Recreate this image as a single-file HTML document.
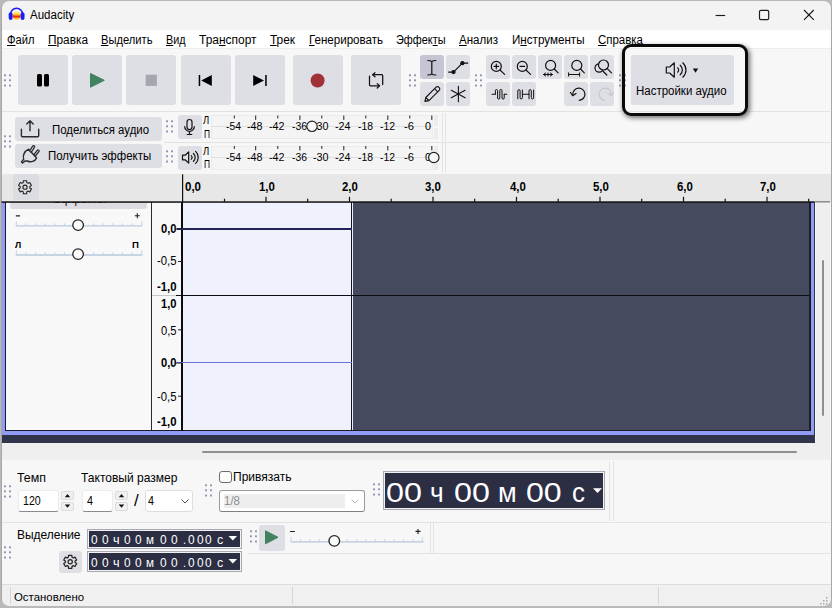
<!DOCTYPE html>
<html lang="ru"><head><meta charset="utf-8"><title>Audacity</title>
<style>
html,body{margin:0;padding:0;}
body{width:832px;height:608px;overflow:hidden;position:relative;background:#b9b9b9;font-family:"Liberation Sans","DejaVu Sans",sans-serif;}
.a{position:absolute;box-sizing:border-box;}
.t{position:absolute;white-space:nowrap;line-height:1;transform-origin:0 0;color:#000;font-family:"Liberation Sans","DejaVu Sans",sans-serif;}
.b{font-weight:bold;}
#win{left:0.500px;top:0.600px;width:831px;height:605.600px;border-radius:8px;background:#f6f6f6;overflow:hidden;border:1px solid #a6a6a6;}
.btn{position:absolute;box-sizing:border-box;background:#dedee5;border-radius:3px;}
.grip{position:absolute;width:7px;height:13px;background-image:radial-gradient(circle at 1.3px 1.3px,#a6a6c0 1.2px,transparent 1.6px);background-size:4.6px 5px;}
svg{position:absolute;overflow:visible;}

</style></head><body>
<div class="a" id="win"></div>
<!-- title bar -->
<div class="a" style="left:1.500px;top:1.400px;width:829px;height:29px;background:#f3f3f3;border-radius:7px 7px 0 0;"></div>
<!-- app icon -->
<svg style="left:8px;top:6px" width="18" height="16" viewBox="8 6 18 16">
  <defs><linearGradient id="lg" x1="0" y1="0" x2="0" y2="1"><stop offset="0" stop-color="#fff3b0"/><stop offset=".35" stop-color="#ffd21e"/><stop offset=".52" stop-color="#ff4a12"/><stop offset=".62" stop-color="#f01a10"/><stop offset=".75" stop-color="#ff9a1a"/><stop offset="1" stop-color="#ffe98a"/></linearGradient></defs>
  <ellipse cx="16.600" cy="15.700" rx="4" ry="4.300" fill="url(#lg)"/>
  <path d="M10.600 14.500 a6 6.300 0 0 1 12 0" fill="none" stroke="#1c1cf0" stroke-width="1.500"/>
  <rect x="8.700" y="12.200" width="3.900" height="7.800" rx="1.950" fill="#1c1cf0"/>
  <rect x="20.600" y="12.200" width="3.900" height="7.800" rx="1.950" fill="#1c1cf0"/>
</svg>
<!-- window controls -->
<svg style="left:700px;top:4px" width="130" height="26" viewBox="0 0 130 26">
  <path d="M15.600 11.500h9.600" stroke="#1a1a1a" stroke-width="1.150" fill="none"/>
  <rect x="59.500" y="6.400" width="9.200" height="9.200" rx="1.400" stroke="#1a1a1a" stroke-width="1.150" fill="none"/>
  <path d="M104 6l9.800 9.800M113.800 6l-9.800 9.800" stroke="#1a1a1a" stroke-width="1.150" fill="none"/>
</svg>
<!-- menubar -->
<div class="a" style="left:1.500px;top:30.200px;width:829px;height:17.600px;background:#fff;"></div>
<!-- toolbars bg -->
<div class="a" style="left:1.500px;top:47.800px;width:829px;height:126.200px;background:#f7f7f7;border-top:1px solid #ededed;"></div>
<div class="a" style="left:2px;top:111px;width:828px;height:1px;background:#e2e2e2;"></div>
<div class="a" style="left:164px;top:142px;width:666px;height:1px;background:#e2e2e2;"></div>

<!-- transport toolbar -->
<svg style="left:3.7px;top:73.5px" width="8" height="13" viewBox="0 0 8 12.5" fill="#9295b5"><rect x="0" y="0" width="2" height="2" rx=".5"/><rect x="5" y="0" width="2" height="2" rx=".5"/><rect x="0" y="5.1" width="2" height="2" rx=".5"/><rect x="5" y="5.1" width="2" height="2" rx=".5"/><rect x="0" y="10.2" width="2" height="2" rx=".5"/><rect x="5" y="10.2" width="2" height="2" rx=".5"/></svg>
<div class="btn" style="left:17.5px;top:55px;width:50px;height:50px"></div>
<div class="btn" style="left:71.8px;top:55px;width:50px;height:50px"></div>
<div class="btn" style="left:126.2px;top:55px;width:50px;height:50px"></div>
<div class="btn" style="left:180.5px;top:55px;width:50px;height:50px"></div>
<div class="btn" style="left:234.8px;top:55px;width:50px;height:50px"></div>
<div class="btn" style="left:293px;top:55px;width:50px;height:50px"></div>
<div class="btn" style="left:351px;top:55px;width:50px;height:50px"></div>
<svg style="left:0;top:0" width="832" height="120" viewBox="0 0 832 120">
  <!-- pause -->
  <rect x="37" y="74" width="5" height="12.5" rx="1.5" fill="#000"/>
  <rect x="44" y="74" width="5" height="12.5" rx="1.5" fill="#000"/>
  <!-- play -->
  <path d="M90.5 73.5 L104.3 80.3 L90.5 87.2Z" fill="#43825f" stroke="#43825f" stroke-width="1" stroke-linejoin="round"/>
  <!-- stop -->
  <rect x="145.7" y="74.7" width="11.2" height="11.2" fill="#a6a6b1"/>
  <!-- skip start -->
  <rect x="198.7" y="75" width="1.5" height="11" fill="#000"/>
  <path d="M201.2 80.5 L211.8 75 V86Z" fill="#000"/>
  <!-- skip end -->
  <rect x="265.2" y="75" width="1.5" height="11" fill="#000"/>
  <path d="M264 80.5 L253.2 75 V86Z" fill="#000"/>
  <!-- record -->
  <circle cx="317.6" cy="80.5" r="7" fill="#a03136"/>
  <!-- loop -->
  <g fill="none" stroke="#111" stroke-width="1.250" stroke-linejoin="round" stroke-linecap="round">
    <path d="M382.7 84.6 V75.7 a1 1 0 0 0 -1 -1 H372.8"/>
    <path d="M375 72.600 L372.700 74.700 L375 76.800"/>
    <path d="M369.500 76 V84.800 a1 1 0 0 0 1 1 H379.400"/>
    <path d="M377.200 83.600 L379.500 85.800 L377.200 88"/>
  </g>
</svg>
<!-- tools toolbar -->
<svg style="left:409.4px;top:73.5px" width="8" height="13" viewBox="0 0 8 12.5" fill="#9295b5"><rect x="0" y="0" width="2" height="2" rx=".5"/><rect x="5" y="0" width="2" height="2" rx=".5"/><rect x="0" y="5.1" width="2" height="2" rx=".5"/><rect x="5" y="5.1" width="2" height="2" rx=".5"/><rect x="0" y="10.2" width="2" height="2" rx=".5"/><rect x="5" y="10.2" width="2" height="2" rx=".5"/></svg>
<div class="btn" style="left:420px;top:55px;width:24px;height:24px;background:#c5c5d3"></div>
<div class="btn" style="left:446px;top:55px;width:24px;height:24px"></div>
<div class="btn" style="left:420px;top:81.5px;width:24px;height:24px"></div>
<div class="btn" style="left:446px;top:81.5px;width:24px;height:24px"></div>
<!-- edit toolbar -->
<svg style="left:475.4px;top:73.5px" width="8" height="13" viewBox="0 0 8 12.5" fill="#9295b5"><rect x="0" y="0" width="2" height="2" rx=".5"/><rect x="5" y="0" width="2" height="2" rx=".5"/><rect x="0" y="5.1" width="2" height="2" rx=".5"/><rect x="5" y="5.1" width="2" height="2" rx=".5"/><rect x="0" y="10.2" width="2" height="2" rx=".5"/><rect x="5" y="10.2" width="2" height="2" rx=".5"/></svg>
<div class="btn" style="left:486px;top:55px;width:24px;height:24px"></div>
<div class="btn" style="left:512px;top:55px;width:24px;height:24px"></div>
<div class="btn" style="left:538px;top:55px;width:24px;height:24px"></div>
<div class="btn" style="left:564px;top:55px;width:24px;height:24px"></div>
<div class="btn" style="left:590px;top:55px;width:24px;height:24px"></div>
<div class="btn" style="left:486px;top:81.5px;width:24px;height:24px"></div>
<div class="btn" style="left:512px;top:81.5px;width:24px;height:24px"></div>
<div class="btn" style="left:564px;top:81.5px;width:24px;height:24px"></div>
<div class="btn" style="left:590px;top:81.5px;width:24px;height:24px"></div>
<svg style="left:0;top:0" width="832" height="120" viewBox="0 0 832 120">
 <g fill="none" stroke="#111" stroke-width="1.2" stroke-linecap="round" stroke-linejoin="round">
  <!-- I-beam -->
  <path d="M427.800 60.500q3 0 4 1.200q1-1.200 4-1.200M427.800 75q3 0 4-1.200q1 1.200 4 1.200M431.800 61.500v12.500"/>
  <!-- envelope -->
  <path d="M448.600 72.100 H453.500 L462.400 63.200 H467.700" stroke-width="1.200"/>
  <circle cx="453.500" cy="72.100" r="2.150" fill="#111" stroke="none"/>
  <circle cx="462.400" cy="63.200" r="2.150" fill="#111" stroke="none"/>
  <!-- pencil -->
  <path d="M424.900 101.400 l0.900-3.900 10.300-10.300 a1.900 1.900 0 0 1 2.700 0 l0.400 0.400 a1.900 1.900 0 0 1 0 2.700 l-10.300 10.300z M425.800 97.500l3.100 3.100 M434.600 88.700l3.100 3.100" stroke-width="1.100"/>
  <!-- multi tool asterisk -->
  <path d="M458.400 86.300v15.400M451.300 90.300l13.800 7.500M465.100 90.300l-13.800 7.500" stroke-width="1.100"/>
  <!-- zoom in -->
  <circle cx="496.3" cy="66.4" r="5"/><path d="M500 70l4.6 4.4M494 66.4h4.6M496.3 64.1v4.6"/>
  <!-- zoom out -->
  <circle cx="522.3" cy="66.4" r="5"/><path d="M526 70l4.6 4.4M520 66.4h4.6"/>
  <!-- fit selection -->
  <circle cx="550.6" cy="65.4" r="5"/><path d="M554.3 69l3.8 3.8"/>
  <path d="M543.5 74.5h9M545.6 73l-2.1 1.5 2.1 1.5M550.4 73l2.1 1.5-2.1 1.5M548 73v3" stroke-width="1"/>
  <!-- fit project -->
  <circle cx="576.8" cy="65.4" r="5"/><path d="M580.5 69l3.8 3.8"/>
  <path d="M568.6 72.8v3.4M579.6 72.8v3.4M568.6 74.5h11" stroke-width="1"/>
  <!-- zoom toggle -->
  <circle cx="599.2" cy="68" r="4.2"/><circle cx="603.5" cy="65" r="5" fill="#dedee5"/><path d="M607.3 68.6l4.2 4.2M603.3 71.5l3.5 3.5"/>
  <!-- trim -->
  <path d="M492 94.2h3.4M504.3 94.2h2.5" stroke-width="1.1"/>
  <path d="M495.4 94.2v-3.6a1.1 1.1 0 0 1 2.2 0v7.4a1.1 1.1 0 0 0 2.2 0v-7.4a1.1 1.1 0 0 1 2.2 0v7.4a1.1 1.1 0 0 0 2.2 0v-3.8" stroke-width="1"/>
  <!-- silence -->
  <path d="M522.4 94.2h6.6" stroke-width="1.1"/>
  <path d="M517.8 98.8v-8a1.1 1.1 0 0 1 2.3 0v7a1.1 1.1 0 0 0 2.3 0v-7.8" stroke-width="1"/>
  <path d="M529 98.8v-8a1.1 1.1 0 0 1 2.3 0v7a1.1 1.1 0 0 0 2.3 0v-7.8" stroke-width="1"/>
  <!-- undo -->
  <path d="M572.8 94.8 a6.1 6.1 0 1 1 6.4 5.5" />
  <path d="M570.4 92.5l2.3 3.2 3.3-2.2"/>
  <!-- redo -->
  <g stroke="#c6c6cf"><path d="M611.2 94.8 a6.1 6.1 0 1 0 -6.4 5.5"/><path d="M613.6 92.5l-2.3 3.2-3.3-2.2"/></g>
 </g>
</svg>
<!-- audio setup -->
<svg style="left:619.4px;top:73.5px" width="8" height="13" viewBox="0 0 8 12.5" fill="#9295b5"><rect x="0" y="0" width="2" height="2" rx=".5"/><rect x="5" y="0" width="2" height="2" rx=".5"/><rect x="0" y="5.1" width="2" height="2" rx=".5"/><rect x="5" y="5.1" width="2" height="2" rx=".5"/><rect x="0" y="10.2" width="2" height="2" rx=".5"/><rect x="5" y="10.2" width="2" height="2" rx=".5"/></svg>
<div class="btn" style="left:630.5px;top:55px;width:103.5px;height:50px"></div>
<svg style="left:0;top:0" width="832" height="120" viewBox="0 0 832 120">
 <g fill="none" stroke="#111" stroke-width="1.2" stroke-linecap="round" stroke-linejoin="round">
  <path d="M666.300 67h3.400l4.600-4.200v14.400l-4.600-4.200h-3.400z"/>
  <path d="M677.600 67.800a2.800 2.800 0 0 1 0 4.400M680.200 65.200a6.400 6.400 0 0 1 0 9.600M682.800 62.800a9.800 9.800 0 0 1 0 14.400"/>
 </g>
 <path d="M692.800 68.500h5.400l-2.700 4.300z" fill="#111"/>
</svg>
<div class="a" style="left:622.4px;top:44.1px;width:125.8px;height:72.2px;border:3.2px solid #0a0a0a;border-radius:9px;box-shadow:1.500px 2px 5px rgba(0,0,0,.55);"></div>
<!-- share / effects toolbar -->
<svg style="left:3.7px;top:135.0px" width="8" height="13" viewBox="0 0 8 12.5" fill="#9295b5"><rect x="0" y="0" width="2" height="2" rx=".5"/><rect x="5" y="0" width="2" height="2" rx=".5"/><rect x="0" y="5.1" width="2" height="2" rx=".5"/><rect x="5" y="5.1" width="2" height="2" rx=".5"/><rect x="0" y="10.2" width="2" height="2" rx=".5"/><rect x="5" y="10.2" width="2" height="2" rx=".5"/></svg>
<div class="btn" style="left:15px;top:117.300px;width:146.800px;height:23.400px"></div>
<div class="btn" style="left:15px;top:143.800px;width:146.800px;height:24px"></div>
<svg style="left:0;top:100px" width="832" height="80" viewBox="0 100 832 80">
 <g fill="none" stroke="#111" stroke-width="1.2" stroke-linecap="round" stroke-linejoin="round">
  <!-- share -->
  <g stroke="#2a2a2a" stroke-width="1.400">
  <path d="M21.400 129.300v6.400a1 1 0 0 0 1 1h15.300a1 1 0 0 0 1-1v-6.400"/>
  <path d="M30 130.800v-9.800M26.800 123.900l3.200-3.200 3.200 3.200"/>
  <!-- plug -->
  <path d="M28.600 149.200 L36.600 158 C35.200 161.300 31 162.800 27.400 161 L25.200 160.900 L22.600 163 L21.500 161.900 L23.700 159.300 C22.400 155.500 24.300 151.300 28.600 149.200Z"/>
  <path d="M30.900 150.900l2.700-4.200M35.300 154.500l2.800-3.500" stroke-width="3.400"/>
  <path d="M30.900 150.900l2.700-4.200M35.300 154.500l2.800-3.500" stroke-width="1" stroke="#dedee5"/>
  </g>
 </g>
</svg>
<!-- meter toolbars -->
<svg style="left:166.4px;top:119.5px" width="8" height="13" viewBox="0 0 8 12.5" fill="#9295b5"><rect x="0" y="0" width="2" height="2" rx=".5"/><rect x="5" y="0" width="2" height="2" rx=".5"/><rect x="0" y="5.1" width="2" height="2" rx=".5"/><rect x="5" y="5.1" width="2" height="2" rx=".5"/><rect x="0" y="10.2" width="2" height="2" rx=".5"/><rect x="5" y="10.2" width="2" height="2" rx=".5"/></svg>
<svg style="left:166.4px;top:150.0px" width="8" height="13" viewBox="0 0 8 12.5" fill="#9295b5"><rect x="0" y="0" width="2" height="2" rx=".5"/><rect x="5" y="0" width="2" height="2" rx=".5"/><rect x="0" y="5.1" width="2" height="2" rx=".5"/><rect x="5" y="5.1" width="2" height="2" rx=".5"/><rect x="0" y="10.2" width="2" height="2" rx=".5"/><rect x="5" y="10.2" width="2" height="2" rx=".5"/></svg>
<div class="btn" style="left:177.5px;top:114.5px;width:24px;height:24px"></div>
<div class="btn" style="left:177.5px;top:145.5px;width:24px;height:24px"></div>
<div class="a" style="left:211px;top:115px;width:221.500px;height:24px;background:#f4f4f4;border:1px solid #ebebeb;"></div>
<div class="a" style="left:211px;top:145.500px;width:221.500px;height:24px;background:#f4f4f4;border:1px solid #ebebeb;"></div>
<div class="a" style="left:211px;top:126px;width:221px;height:1px;background:#dedede;"></div>
<div class="a" style="left:211px;top:157px;width:221px;height:1px;background:#dedede;"></div>
<div class="a" style="left:434px;top:115px;width:4px;height:11px;background:#ececec;"></div>
<div class="a" style="left:434px;top:128px;width:4px;height:11px;background:#ececec;"></div>
<div class="a" style="left:434px;top:145.5px;width:4px;height:11px;background:#ececec;"></div>
<div class="a" style="left:434px;top:158.5px;width:4px;height:11px;background:#ececec;"></div>
<div class="a" style="left:442px;top:113px;width:1px;height:60px;background:#e4e4e4;"></div>
<div class="a" style="left:445px;top:113px;width:1px;height:60px;background:#e4e4e4;"></div>
<svg style="left:0;top:100px" width="832" height="80" viewBox="0 100 832 80">
 <g fill="none" stroke="#111" stroke-width="1.2" stroke-linecap="round" stroke-linejoin="round">
  <!-- mic -->
  <rect x="187" y="119.5" width="5" height="10" rx="2.5"/>
  <path d="M184.7 126.5a4.8 4.8 0 0 0 9.6 0M189.5 131.5v2.8M187.2 134.5h4.6"/>
  <!-- speaker -->
  <path d="M182.5 155.2h2.6l3.6-3.3v11.2l-3.6-3.3h-2.6z"/>
  <path d="M191.2 155.6a2.3 2.3 0 0 1 0 3.6M193.4 153.5a5.2 5.2 0 0 1 0 7.8M195.6 151.4a8.2 8.2 0 0 1 0 12"/>
 </g>
 <g stroke="#222" stroke-width="1">
  <path d="M234.3 115.5v2.9M255.7 115.5v4.4M277.8 115.5v2.9M299.9 115.5v4.4M321.8 115.5v2.9M343.8 115.5v4.4M365.8 115.5v2.9M387.8 115.5v4.4M409.8 115.5v2.9M431.8 115.5v4.4"/>
  <path d="M234.3 146v2.9M255.7 146v4.4M277.8 146v2.9M299.9 146v4.4M321.8 146v2.9M343.8 146v4.4M365.8 146v2.9M387.8 146v4.4M409.8 146v2.9M431.8 146v4.4"/>
 </g>
</svg>
<!-- ruler -->
<div class="a" style="left:1.500px;top:173.600px;width:829px;height:28.400px;background:#e7e7e7;"></div>
<div class="btn" style="left:12.700px;top:174.300px;width:26.200px;height:26px;background:#dcdce3"></div>
<svg style="left:0;top:170px;z-index:2" width="832" height="40" viewBox="0 170 832 40">
 <g fill="none" stroke="#222" stroke-width="1.1" stroke-linejoin="round">
  <path d="M26.80 191.76 L26.67 193.69 L23.33 193.69 L23.20 191.76 L21.96 191.04 L20.21 191.89 L18.55 189.00 L20.15 187.92 L20.15 186.48 L18.55 185.40 L20.21 182.51 L21.96 183.36 L23.20 182.64 L23.33 180.71 L26.67 180.71 L26.80 182.64 L28.04 183.36 L29.79 182.51 L31.45 185.40 L29.85 186.48 L29.85 187.92 L31.45 189.00 L29.79 191.89 L28.04 191.04Z"/>
  <circle cx="25" cy="187.200" r="2.100"/>
 </g>
 <rect x="182" y="174.300" width="1.200" height="28" fill="#111"/>
 <rect x="1.500" y="201.300" width="813" height="1.500" fill="#111"/>
 <rect x="814.500" y="201.300" width="15.500" height="1.100" fill="#6a6a6a"/>
 <g stroke="#111" stroke-width="1.200">
  <path d="M266 196.800v5M349.500 196.800v5M433 196.800v5M516.500 196.800v5M600 196.800v5M683.500 196.800v5M767 196.800v5"/>
  <path d="M224.500 198.800v3M307.700 198.800v3M391.200 198.800v3M474.700 198.800v3M558.200 198.800v3M641.700 198.800v3M725.200 198.800v3M808.700 198.800v3"/>
 </g>
</svg>
<!-- track area -->
<div class="a" style="left:1.500px;top:202px;width:813px;height:240.500px;background:#31354b;"></div>
<div class="a" style="left:1.500px;top:202px;width:812.500px;height:232.800px;background:#8f9bf5;"></div>
<div class="a" style="left:5px;top:202px;width:805.500px;height:229.300px;background:#1c1c28;"></div>
<div class="a" style="left:6px;top:202px;width:146px;height:228px;background:#f8f8f8;"></div>
<div class="a" style="left:152.200px;top:202px;width:29px;height:228px;background:#f8f8f8;"></div>
<div class="a" style="left:151.200px;top:202px;width:1px;height:228px;background:#2a2a34;"></div>
<div class="a" style="left:152.4px;top:294.5px;width:30px;height:1px;background:#c8c8c8;"></div>
<div class="a" style="left:181.200px;top:202px;width:1.800px;height:228.500px;background:#0c0c10;"></div>
<div class="a" style="left:183px;top:202px;width:168px;height:228px;background:#eff1fd;"></div>
<div class="a" style="left:351px;top:202px;width:0.900px;height:228.500px;background:#15151c;"></div>
<div class="a" style="left:351.900px;top:202px;width:1.300px;height:228px;background:#eceefb;"></div>
<div class="a" style="left:353.200px;top:202px;width:456.300px;height:228px;background:#464a5e;"></div>
<div class="a" style="left:176.300px;top:294.700px;width:633.200px;height:1.100px;background:#0c0c10;"></div>
<div class="a" style="left:177px;top:228.2px;width:175px;height:1.6px;background:#23235a;"></div>
<div class="a" style="left:177px;top:362.2px;width:175px;height:1.1px;background:#6a74d8;"></div>
<!-- effects button (cut) -->
<div class="a" style="left:10px;top:202px;width:136.5px;height:6.5px;background:#dcdce3;border-radius:0 0 3px 3px;overflow:hidden;"><span style="position:absolute;left:43.300px;top:-8.800px;font-size:12px;line-height:1;white-space:nowrap;transform:scaleX(.97);transform-origin:0 0;color:#111">Эффекты</span></div>
<svg style="left:0;top:200px" width="832" height="250" viewBox="0 200 832 250">
 <g stroke="#b7c7dc" stroke-width="1.3" fill="none">
  <path d="M15.800 225.900h126.500M15.800 255h126.500"/>
 </g>
 <g stroke="#c6d3e3" stroke-width="1" fill="none">
  <path d="M16.3 221.4v4.5M26.0 223.3v2.6M35.6 223.3v2.6M45.2 223.3v2.6M54.9 223.3v2.6M64.5 223.3v2.6M74.2 223.3v2.6M83.8 223.3v2.6M93.5 223.3v2.6M103.2 223.3v2.6M112.8 223.3v2.6M122.5 223.3v2.6M132.1 223.3v2.6M141.8 221.4v4.5"/>
  <path d="M16.3 250.5v4.5M26.0 252.4v2.6M35.6 252.4v2.6M45.2 252.4v2.6M54.9 252.4v2.6M64.5 252.4v2.6M74.2 252.4v2.6M83.8 252.4v2.6M93.5 252.4v2.6M103.2 252.4v2.6M112.8 252.4v2.6M122.5 252.4v2.6M132.1 252.4v2.6M141.8 250.5v4.5"/>
 </g>
 <circle cx="78.100" cy="225.100" r="5.300" fill="#fcfcfc" stroke="#222" stroke-width="1.300"/>
 <circle cx="78.100" cy="254.100" r="5.300" fill="#fcfcfc" stroke="#222" stroke-width="1.300"/>
 <g stroke="#222" stroke-width="1" fill="none">
  <path d="M176 229h6M178 261.500h3.500M178 329.800h3.500M176 363h6M178 396.200h3.500"/>
  <path d="M15.800 215.900h4.300M134.800 215.800h5M137.300 213.300v5" stroke-width="1.100"/>
 </g>
</svg>
<!-- area below tracks -->
<div class="a" style="left:2px;top:442.5px;width:828px;height:18px;background:#efefef;"></div>
<div class="a" style="left:814.500px;top:202px;width:15.500px;height:241px;background:#efefef;border-left:1.600px solid #f9f9f9;"></div>
<div class="a" style="left:202px;top:451.3px;width:595px;height:1.6px;background:#8f8f8f;border-radius:1px;"></div>
<div class="a" style="left:822.300px;top:260px;width:1.600px;height:156px;background:#8f8f8f;border-radius:1px;"></div>
<!-- bottom toolbars -->
<div class="a" style="left:2px;top:460px;width:828px;height:124.5px;background:#f7f7f7;"></div>
<div class="a" style="left:2px;top:521.5px;width:828px;height:1px;background:#e3e3e3;"></div>
<div class="a" style="left:248px;top:553.3px;width:582px;height:1px;background:#e3e3e3;"></div>
<div class="a" style="left:609.3px;top:461px;width:1px;height:60px;background:#e3e3e3;"></div>
<div class="a" style="left:612.5px;top:461px;width:1px;height:60px;background:#e3e3e3;"></div>
<div class="a" style="left:430px;top:523px;width:1px;height:30px;background:#e3e3e3;"></div>
<div class="a" style="left:433.3px;top:523px;width:1px;height:30px;background:#e3e3e3;"></div>
<!-- time signature toolbar -->
<svg style="left:3.7px;top:484.5px" width="8" height="13" viewBox="0 0 8 12.5" fill="#9295b5"><rect x="0" y="0" width="2" height="2" rx=".5"/><rect x="5" y="0" width="2" height="2" rx=".5"/><rect x="0" y="5.1" width="2" height="2" rx=".5"/><rect x="5" y="5.1" width="2" height="2" rx=".5"/><rect x="0" y="10.2" width="2" height="2" rx=".5"/><rect x="5" y="10.2" width="2" height="2" rx=".5"/></svg>
<div class="a" style="left:18px;top:490px;width:40.5px;height:21.5px;background:#fff;border:1px solid #ececec;border-bottom:1.2px solid #8a8a8a;border-radius:3px;"></div>
<div class="a" style="left:61px;top:491px;width:13px;height:9px;background:#f0f0f0;border:1px solid #dcdcdc;border-radius:2px"></div>
<div class="a" style="left:61px;top:501.500px;width:13px;height:9px;background:#f0f0f0;border:1px solid #dcdcdc;border-radius:2px"></div>
<div class="a" style="left:82px;top:490px;width:30.5px;height:21.5px;background:#fff;border:1px solid #ececec;border-bottom:1.2px solid #8a8a8a;border-radius:3px;"></div>
<div class="a" style="left:115px;top:491px;width:13px;height:9px;background:#f0f0f0;border:1px solid #dcdcdc;border-radius:2px"></div>
<div class="a" style="left:115px;top:501.5px;width:13px;height:9px;background:#f0f0f0;border:1px solid #dcdcdc;border-radius:2px"></div>
<div class="a" style="left:144.5px;top:490px;width:48px;height:21.5px;background:#fff;border:1px solid #dedede;border-radius:3px;"></div>
<svg style="left:0;top:460px" width="832" height="148" viewBox="0 460 832 148">
 <g fill="#111">
  <path d="M64.800 497.3l2.700-3.300 2.700 3.300z"/><path d="M64.800 504.500l2.700 3.300 2.700-3.300z"/>
  <path d="M118.800 497.3l2.700-3.300 2.700 3.300z"/><path d="M118.800 504.500l2.700 3.300 2.700-3.300z"/>
 </g>
 <g fill="none" stroke="#555" stroke-width="1">
  <path d="M181.500 499.500l3.500 3.500 3.500-3.500"/>
 </g>
</svg>
<!-- snapping toolbar -->
<svg style="left:204.9px;top:483.5px" width="8" height="13" viewBox="0 0 8 12.5" fill="#9295b5"><rect x="0" y="0" width="2" height="2" rx=".5"/><rect x="5" y="0" width="2" height="2" rx=".5"/><rect x="0" y="5.1" width="2" height="2" rx=".5"/><rect x="5" y="5.1" width="2" height="2" rx=".5"/><rect x="0" y="10.2" width="2" height="2" rx=".5"/><rect x="5" y="10.2" width="2" height="2" rx=".5"/></svg>
<div class="a" style="left:219.200px;top:470.600px;width:12.600px;height:12.300px;background:#fcfcfc;border:1px solid #6c6c6c;border-radius:3px;"></div>
<div class="a" style="left:219.300px;top:490px;width:145.500px;height:21.600px;background:#fff;border:1px solid #9c9c9c;border-bottom-color:#808080;border-radius:3px;"></div>
<div class="a" style="left:224px;top:494px;width:121px;height:13.5px;background:#eeeeee;"></div>
<!-- time toolbar -->
<svg style="left:372.7px;top:482.5px" width="8" height="13" viewBox="0 0 8 12.5" fill="#9295b5"><rect x="0" y="0" width="2" height="2" rx=".5"/><rect x="5" y="0" width="2" height="2" rx=".5"/><rect x="0" y="5.1" width="2" height="2" rx=".5"/><rect x="5" y="5.1" width="2" height="2" rx=".5"/><rect x="0" y="10.2" width="2" height="2" rx=".5"/><rect x="5" y="10.2" width="2" height="2" rx=".5"/></svg>
<div class="a" style="left:383.300px;top:471px;width:221.3px;height:39px;background:#2c2e44;border:1px solid #a9a9b4;box-shadow:inset 0 0 0 1px #f2f2f2;"></div>
<svg style="left:0;top:460px" width="832" height="148" viewBox="0 460 832 148">
 <path d="M593 488.300h9l-4.500 4.700z" fill="#fff"/>
</svg>
<!-- selection toolbar -->
<svg style="left:3.7px;top:546.0px" width="8" height="13" viewBox="0 0 8 12.5" fill="#9295b5"><rect x="0" y="0" width="2" height="2" rx=".5"/><rect x="5" y="0" width="2" height="2" rx=".5"/><rect x="0" y="5.1" width="2" height="2" rx=".5"/><rect x="5" y="5.1" width="2" height="2" rx=".5"/><rect x="0" y="10.2" width="2" height="2" rx=".5"/><rect x="5" y="10.2" width="2" height="2" rx=".5"/></svg>
<div class="btn" style="left:59px;top:551px;width:22.5px;height:21.5px;"></div>
<div class="a" style="left:87px;top:528.500px;width:154.5px;height:20.5px;background:#2c2e44;border:1px solid #a9a9b4;box-shadow:inset 0 0 0 1px #f2f2f2;"></div>
<div class="a" style="left:87px;top:551.3px;width:154.5px;height:20.7px;background:#2c2e44;border:1px solid #a9a9b4;box-shadow:inset 0 0 0 1px #f2f2f2;"></div>
<svg style="left:0;top:460px" width="832" height="148" viewBox="0 460 832 148">
 <path d="M228.500 536h8.600l-4.300 4.600z" fill="#fff"/>
 <path d="M228.500 559h8.600l-4.300 4.600z" fill="#fff"/>
 <g fill="none" stroke="#222" stroke-width="1.200" stroke-linejoin="round"><path d="M72.00 566.36 L71.87 568.29 L68.53 568.29 L68.40 566.36 L67.16 565.64 L65.41 566.49 L63.75 563.60 L65.35 562.52 L65.35 561.08 L63.75 560.00 L65.41 557.11 L67.16 557.96 L68.40 557.24 L68.53 555.31 L71.87 555.31 L72.00 557.24 L73.24 557.96 L74.99 557.11 L76.65 560.00 L75.05 561.08 L75.05 562.52 L76.65 563.60 L74.99 566.49 L73.24 565.64Z"/><circle cx="70.200" cy="561.800" r="2.100"/></g>
</svg>
<!-- play at speed toolbar -->
<svg style="left:249.9px;top:530.0px" width="8" height="13" viewBox="0 0 8 12.5" fill="#9295b5"><rect x="0" y="0" width="2" height="2" rx=".5"/><rect x="5" y="0" width="2" height="2" rx=".5"/><rect x="0" y="5.1" width="2" height="2" rx=".5"/><rect x="5" y="5.1" width="2" height="2" rx=".5"/><rect x="0" y="10.2" width="2" height="2" rx=".5"/><rect x="5" y="10.2" width="2" height="2" rx=".5"/></svg>
<div class="btn" style="left:259px;top:525px;width:26px;height:25.600px;"></div>
<svg style="left:0;top:460px" width="832" height="148" viewBox="0 460 832 148">
 <path d="M265.500 530.800 L278 537.300 L265.500 543.800Z" fill="#43825f" stroke="#43825f" stroke-width="1" stroke-linejoin="round"/>
 <g stroke="#b7c7dc" stroke-width="1.300" fill="none"><path d="M290.600 541.800h133.100"/></g>
 <g stroke="#c6d3e3" stroke-width="1" fill="none"><path d="M291.1 537.3v4.5M300.5 539.2v2.6M309.8 539.2v2.6M319.2 539.2v2.6M328.6 539.2v2.6M338.0 539.2v2.6M347.3 539.2v2.6M356.7 539.2v2.6M366.1 539.2v2.6M375.4 539.2v2.6M384.8 539.2v2.6M394.2 539.2v2.6M403.5 539.2v2.6M412.9 539.2v2.6M422.3 537.3v4.5"/></g>
 <circle cx="334.300" cy="540.900" r="5.300" fill="#fcfcfc" stroke="#222" stroke-width="1.300"/>
 <g stroke="#222" stroke-width="1.100" fill="none"><path d="M290 531.500h4.900M415.500 531.400h5M418 528.900v5"/></g>
 <path d="M351.500 499.500l3.500 3.500 3.500-3.500" stroke="#b5b5b5" fill="none"/>
</svg>
<!-- status bar -->
<div class="a" style="left:1.500px;top:583.800px;width:829px;height:22.200px;background:#f0f0f0;border-top:1.400px solid #dcdcdc;border-radius:0 0 7px 7px;"></div>
<div class="a" style="left:10px;top:587px;width:1px;height:17px;background:#d6d6d6;"></div>
<div class="a" style="left:292.300px;top:587px;width:1px;height:17px;background:#d6d6d6;"></div>
<div class="a" style="left:657.500px;top:587px;width:1px;height:17px;background:#d6d6d6;"></div>
<svg style="left:818px;top:595px" width="12" height="12" viewBox="0 0 12 12"><g fill="#a8a8a8"><rect x="8" y="2" width="1.500" height="1.500"/><rect x="8" y="5" width="1.500" height="1.500"/><rect x="8" y="8" width="1.500" height="1.500"/><rect x="5" y="5" width="1.500" height="1.500"/><rect x="5" y="8" width="1.500" height="1.500"/><rect x="2" y="8" width="1.500" height="1.500"/></g></svg>
<svg style="left:0;top:100px;z-index:3" width="832" height="80" viewBox="0 100 832 80">
 <circle cx="312" cy="126.300" r="5.200" fill="#f7f7f7" stroke="#222" stroke-width="1.200"/>
 <circle cx="433.800" cy="157.500" r="5.200" fill="#f7f7f7" stroke="#222" stroke-width="1.200"/>
</svg>

<span class="t" id="t0" style="left:29.58px;top:9px;font-size:12px;transform:scaleX(0.9602);">Audacity</span>
<span class="t" id="t1" style="left:7.28px;top:34px;font-size:12px;transform:scaleX(0.9317);"><u>Ф</u>айл</span>
<span class="t" id="t2" style="left:48.28px;top:34px;font-size:12px;transform:scaleX(0.9865);"><u>П</u>равка</span>
<span class="t" id="t3" style="left:101.28px;top:34px;font-size:12px;transform:scaleX(0.9300);"><u>В</u>ыделить</span>
<span class="t" id="t4" style="left:166.28px;top:34px;font-size:12px;transform:scaleX(0.8972);"><u>В</u>ид</span>
<span class="t" id="t5" style="left:199.28px;top:34px;font-size:12px;transform:scaleX(0.9959);">Тра<u>н</u>спорт</span>
<span class="t" id="t6" style="left:270.28px;top:34px;font-size:12px;transform:scaleX(0.9895);"><u>Т</u>рек</span>
<span class="t" id="t7" style="left:308.78px;top:34px;font-size:12px;transform:scaleX(0.9634);"><u>Г</u>енерировать</span>
<span class="t" id="t8" style="left:395.78px;top:34px;font-size:12px;transform:scaleX(0.9072);">Эффек<u>т</u>ы</span>
<span class="t" id="t9" style="left:459.28px;top:34px;font-size:12px;transform:scaleX(0.9622);"><u>А</u>нализ</span>
<span class="t" id="t10" style="left:511.78px;top:34px;font-size:12px;transform:scaleX(0.9687);">И<u>н</u>струменты</span>
<span class="t" id="t11" style="left:598.28px;top:34px;font-size:12px;transform:scaleX(0.9555);"><u>С</u>правка</span>
<span class="t" id="t12" style="left:636.28px;top:85px;font-size:12px;transform:scaleX(0.9567);">Настройки аудио</span>
<span class="t" id="t13" style="left:51.78px;top:124px;font-size:12px;transform:scaleX(0.9498);">Поделиться аудио</span>
<span class="t" id="t14" style="left:48.08px;top:150px;font-size:12px;transform:scaleX(0.9545);">Получить эффекты</span>
<span class="t" id="t15" style="left:203.20px;top:116px;font-size:10px;transform:scaleX(0.9448);">Л</span>
<span class="t" id="t16" style="left:203.70px;top:130px;font-size:10px;transform:scaleX(0.8348);">П</span>
<span class="t" id="t17" style="left:203.20px;top:147px;font-size:10px;transform:scaleX(0.9448);">Л</span>
<span class="t" id="t18" style="left:203.70px;top:160px;font-size:10px;transform:scaleX(0.8348);">П</span>
<span class="t" id="t19" style="left:225.82px;top:121px;font-size:11.3px;transform:scaleX(0.9187);">-54</span>
<span class="t" id="t20" style="left:225.82px;top:152px;font-size:11.3px;transform:scaleX(0.9187);">-54</span>
<span class="t" id="t21" style="left:247.32px;top:121px;font-size:11.3px;transform:scaleX(0.9493);">-48</span>
<span class="t" id="t22" style="left:247.32px;top:152px;font-size:11.3px;transform:scaleX(0.9493);">-48</span>
<span class="t" id="t23" style="left:269.32px;top:121px;font-size:11.3px;transform:scaleX(0.9493);">-42</span>
<span class="t" id="t24" style="left:269.32px;top:152px;font-size:11.3px;transform:scaleX(0.9493);">-42</span>
<span class="t" id="t25" style="left:291.82px;top:121px;font-size:11.3px;transform:scaleX(0.9187);">-36</span>
<span class="t" id="t26" style="left:291.82px;top:152px;font-size:11.3px;transform:scaleX(0.9187);">-36</span>
<span class="t" id="t27" style="left:313.32px;top:121px;font-size:11.3px;transform:scaleX(0.9493);">-30</span>
<span class="t" id="t28" style="left:313.32px;top:152px;font-size:11.3px;transform:scaleX(0.9493);">-30</span>
<span class="t" id="t29" style="left:335.32px;top:121px;font-size:11.3px;transform:scaleX(0.9493);">-24</span>
<span class="t" id="t30" style="left:335.32px;top:152px;font-size:11.3px;transform:scaleX(0.9493);">-24</span>
<span class="t" id="t31" style="left:357.82px;top:121px;font-size:11.3px;transform:scaleX(0.9187);">-18</span>
<span class="t" id="t32" style="left:357.82px;top:152px;font-size:11.3px;transform:scaleX(0.9187);">-18</span>
<span class="t" id="t33" style="left:379.82px;top:121px;font-size:11.3px;transform:scaleX(0.9187);">-12</span>
<span class="t" id="t34" style="left:379.82px;top:152px;font-size:11.3px;transform:scaleX(0.9187);">-12</span>
<span class="t" id="t35" style="left:403.82px;top:121px;font-size:11.3px;transform:scaleX(0.9953);">-6</span>
<span class="t" id="t36" style="left:403.82px;top:152px;font-size:11.3px;transform:scaleX(0.9953);">-6</span>
<span class="t" id="t37" style="left:425.32px;top:121px;font-size:11.3px;transform:scaleX(0.9529);">0</span>
<span class="t" id="t38" style="left:425.32px;top:152px;font-size:11.3px;transform:scaleX(0.9529);">0</span>
<span class="t b" id="t39" style="left:184.58px;top:181px;font-size:12px;transform:scaleX(0.9588);">0,0</span>
<span class="t b" id="t40" style="left:259.08px;top:181px;font-size:12px;transform:scaleX(0.9528);">1,0</span>
<span class="t b" id="t41" style="left:341.68px;top:181px;font-size:12px;transform:scaleX(0.9468);">2,0</span>
<span class="t b" id="t42" style="left:425.18px;top:181px;font-size:12px;transform:scaleX(0.9528);">3,0</span>
<span class="t b" id="t43" style="left:509.68px;top:181px;font-size:12px;transform:scaleX(0.9528);">4,0</span>
<span class="t b" id="t44" style="left:593.18px;top:181px;font-size:12px;transform:scaleX(0.9528);">5,0</span>
<span class="t b" id="t45" style="left:676.68px;top:181px;font-size:12px;transform:scaleX(0.9528);">6,0</span>
<span class="t b" id="t46" style="left:760.18px;top:181px;font-size:12px;transform:scaleX(0.9528);">7,0</span>
<span class="t b" id="t47" style="left:160.58px;top:223px;font-size:12px;transform:scaleX(0.9288);">0,0</span>
<span class="t" id="t48" style="left:156.58px;top:255px;font-size:12px;transform:scaleX(0.9426);">-0,5</span>
<span class="t b" id="t49" style="left:156.58px;top:281px;font-size:12px;transform:scaleX(0.9426);">-1,0</span>
<span class="t b" id="t50" style="left:160.58px;top:298px;font-size:12px;transform:scaleX(0.9288);">1,0</span>
<span class="t" id="t51" style="left:160.58px;top:325px;font-size:12px;transform:scaleX(0.9288);">0,5</span>
<span class="t b" id="t52" style="left:160.58px;top:357px;font-size:12px;transform:scaleX(0.9288);">0,0</span>
<span class="t" id="t53" style="left:156.58px;top:391px;font-size:12px;transform:scaleX(0.9426);">-0,5</span>
<span class="t b" id="t54" style="left:156.58px;top:416px;font-size:12px;transform:scaleX(0.9426);">-1,0</span>
<span class="t b" id="t55" style="left:14.76px;top:241px;font-size:9px;transform:scaleX(0.9798);">Л</span>
<span class="t b" id="t56" style="left:132.46px;top:241px;font-size:9px;transform:scaleX(1.0667);">П</span>
<span class="t" id="t57" style="left:16.72px;top:471px;font-size:13px;transform:scaleX(0.9533);">Темп</span>
<span class="t" id="t58" style="left:81.22px;top:471px;font-size:13px;transform:scaleX(0.9255);">Тактовый размер</span>
<span class="t" id="t59" style="left:22.78px;top:495px;font-size:12px;transform:scaleX(0.8836);">120</span>
<span class="t" id="t60" style="left:86.78px;top:495px;font-size:12px;transform:scaleX(0.8972);">4</span>
<span class="t" id="t61" style="left:134.24px;top:493px;font-size:16px;transform:scaleX(1.0554);">/</span>
<span class="t" id="t62" style="left:147.78px;top:495px;font-size:12px;transform:scaleX(0.8972);">4</span>
<span class="t" id="t63" style="left:232.75px;top:471px;font-size:12.5px;transform:scaleX(0.9615);">Привязать</span>
<span class="t" id="t64" style="left:223.78px;top:495px;font-size:12px;transform:scaleX(0.9588);color:#8f8f8f;">1/8</span>
<span class="t" id="t65" style="left:16.72px;top:528px;font-size:13px;transform:scaleX(0.9218);">Выделение</span>
<span class="t" id="t66" style="left:14.19px;top:592px;font-size:11.8px;transform:scaleX(0.9669);">Остановлено</span>
<span class="t" id="t67" style="left:385.62px;top:479px;font-size:28px;transform:scaleX(1.1523);color:#fff;">00</span>
<span class="t" id="t68" style="left:430.12px;top:479px;font-size:28px;transform:scaleX(0.9388);color:#fff;">ч</span>
<span class="t" id="t69" style="left:453.82px;top:479px;font-size:28px;transform:scaleX(1.1490);color:#fff;">00</span>
<span class="t" id="t70" style="left:498.12px;top:479px;font-size:28px;transform:scaleX(0.9714);color:#fff;">м</span>
<span class="t" id="t71" style="left:526.32px;top:479px;font-size:28px;transform:scaleX(1.1458);color:#fff;">00</span>
<span class="t" id="t72" style="left:571.62px;top:479px;font-size:28px;transform:scaleX(0.9286);color:#fff;">с</span>
<span class="t" id="t73" style="left:91.29px;top:533px;font-size:13.5px;transform:scaleX(0.8782);color:#fff;">0</span>
<span class="t" id="t74" style="left:102.19px;top:533px;font-size:13.5px;transform:scaleX(0.8782);color:#fff;">0</span>
<span class="t" id="t75" style="left:112.99px;top:533px;font-size:13.5px;transform:scaleX(0.9366);color:#fff;">ч</span>
<span class="t" id="t76" style="left:124.29px;top:533px;font-size:13.5px;transform:scaleX(0.8782);color:#fff;">0</span>
<span class="t" id="t77" style="left:135.49px;top:533px;font-size:13.5px;transform:scaleX(0.8782);color:#fff;">0</span>
<span class="t" id="t78" style="left:146.19px;top:533px;font-size:13.5px;transform:scaleX(0.8620);color:#fff;">м</span>
<span class="t" id="t79" style="left:159.69px;top:533px;font-size:13.5px;transform:scaleX(0.8782);color:#fff;">0</span>
<span class="t" id="t80" style="left:170.99px;top:533px;font-size:13.5px;transform:scaleX(0.8782);color:#fff;">0</span>
<span class="t" id="t81" style="left:182.59px;top:533px;font-size:13.5px;transform:scaleX(0.7967);color:#fff;">.</span>
<span class="t" id="t82" style="left:187.89px;top:533px;font-size:13.5px;transform:scaleX(0.8782);color:#fff;">0</span>
<span class="t" id="t83" style="left:196.69px;top:533px;font-size:13.5px;transform:scaleX(0.8782);color:#fff;">0</span>
<span class="t" id="t84" style="left:205.49px;top:533px;font-size:13.5px;transform:scaleX(0.8782);color:#fff;">0</span>
<span class="t" id="t85" style="left:217.09px;top:533px;font-size:13.5px;transform:scaleX(0.9185);color:#fff;">с</span>
<span class="t" id="t86" style="left:91.29px;top:556px;font-size:13.5px;transform:scaleX(0.8782);color:#fff;">0</span>
<span class="t" id="t87" style="left:102.19px;top:556px;font-size:13.5px;transform:scaleX(0.8782);color:#fff;">0</span>
<span class="t" id="t88" style="left:112.99px;top:556px;font-size:13.5px;transform:scaleX(0.9366);color:#fff;">ч</span>
<span class="t" id="t89" style="left:124.29px;top:556px;font-size:13.5px;transform:scaleX(0.8782);color:#fff;">0</span>
<span class="t" id="t90" style="left:135.49px;top:556px;font-size:13.5px;transform:scaleX(0.8782);color:#fff;">0</span>
<span class="t" id="t91" style="left:146.19px;top:556px;font-size:13.5px;transform:scaleX(0.8620);color:#fff;">м</span>
<span class="t" id="t92" style="left:159.69px;top:556px;font-size:13.5px;transform:scaleX(0.8782);color:#fff;">0</span>
<span class="t" id="t93" style="left:170.99px;top:556px;font-size:13.5px;transform:scaleX(0.8782);color:#fff;">0</span>
<span class="t" id="t94" style="left:182.59px;top:556px;font-size:13.5px;transform:scaleX(0.7967);color:#fff;">.</span>
<span class="t" id="t95" style="left:187.89px;top:556px;font-size:13.5px;transform:scaleX(0.8782);color:#fff;">0</span>
<span class="t" id="t96" style="left:196.69px;top:556px;font-size:13.5px;transform:scaleX(0.8782);color:#fff;">0</span>
<span class="t" id="t97" style="left:205.49px;top:556px;font-size:13.5px;transform:scaleX(0.8782);color:#fff;">0</span>
<span class="t" id="t98" style="left:217.09px;top:556px;font-size:13.5px;transform:scaleX(0.9185);color:#fff;">с</span>
</body></html>
